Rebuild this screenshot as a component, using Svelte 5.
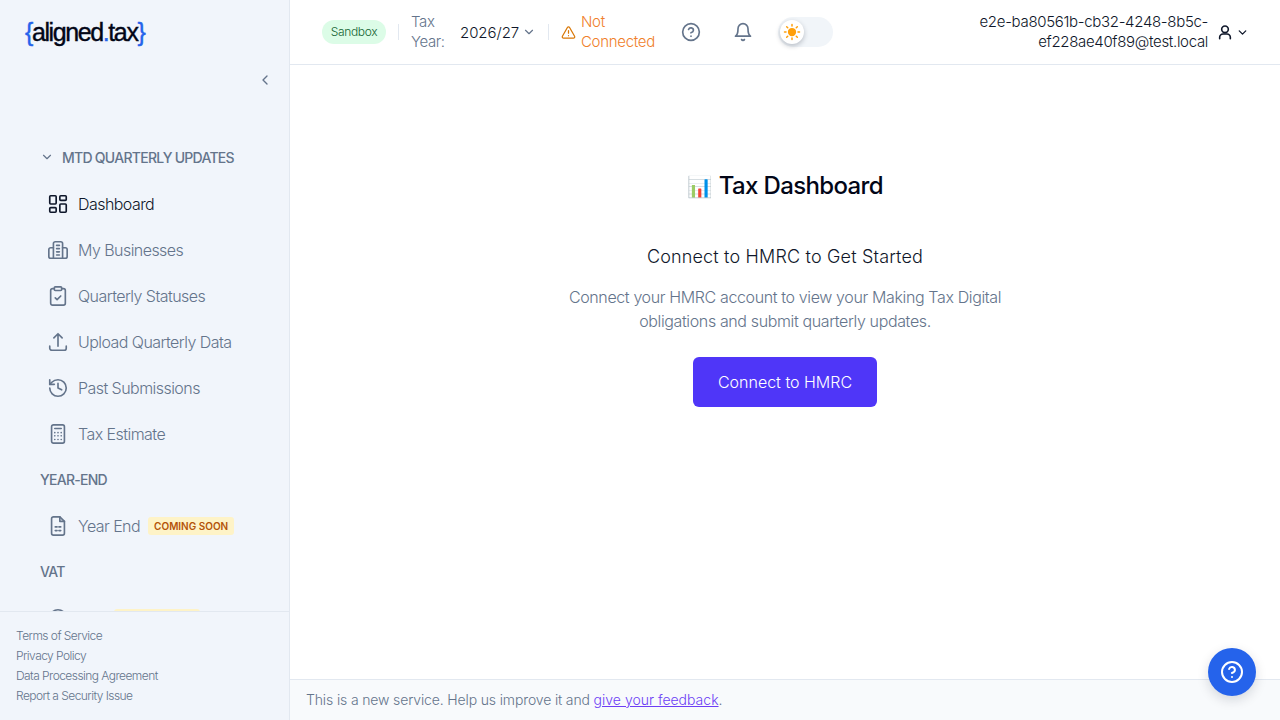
<script>
  const nav = [
    { label: 'Dashboard', icon: 'dash', active: true },
    { label: 'My Businesses', icon: 'biz' },
    { label: 'Quarterly Statuses', icon: 'clip' },
    { label: 'Upload Quarterly Data', icon: 'up' },
    { label: 'Past Submissions', icon: 'hist' },
    { label: 'Tax Estimate', icon: 'calc' }
  ];
  const legal = ['Terms of Service', 'Privacy Policy', 'Data Processing Agreement', 'Report a Security Issue'];
</script>

{#snippet icon(name)}
  <svg class="ico" viewBox="0 0 24 24" fill="none" stroke="currentColor" stroke-width="1.800" stroke-linecap="round" stroke-linejoin="round">
    {#if name === 'dash'}
      <rect x="3" y="3" width="7" height="9" rx="1"/><rect x="14" y="3" width="7" height="5" rx="1"/><rect x="14" y="12" width="7" height="9" rx="1"/><rect x="3" y="16" width="7" height="5" rx="1"/>
    {:else if name === 'biz'}
      <path d="M7 21V5a2 2 0 0 1 2-2h6a2 2 0 0 1 2 2v16"/><path d="M7 9.500H4a2 2 0 0 0-2 2V19a2 2 0 0 0 2 2h16a2 2 0 0 0 2-2v-7.500a2 2 0 0 0-2-2h-3"/><path d="M10.500 7h3M10.500 10.500h3M10.500 14h3M10.500 17.500h3"/>
    {:else if name === 'clip'}
      <rect x="8" y="2" width="8" height="4" rx="1"/><path d="M16 4h2a2 2 0 0 1 2 2v14a2 2 0 0 1-2 2H6a2 2 0 0 1-2-2V6a2 2 0 0 1 2-2h2"/><path d="m9 14 2 2 4-4"/>
    {:else if name === 'up'}
      <path d="M3 16.500v2.250A2.250 2.250 0 0 0 5.250 21h13.500A2.250 2.250 0 0 0 21 18.750V16.500"/><path d="M7.500 7.500 12 3l4.500 4.500M12 3v13.500"/>
    {:else if name === 'hist'}
      <path d="M3 12a9 9 0 1 0 9-9 9.750 9.750 0 0 0-6.740 2.740L3 8"/><path d="M3 3v5h5"/><path d="M12 7v5l4 2"/>
    {:else if name === 'calc'}
      <rect x="5" y="2" width="14" height="20" rx="2"/><path d="M8.500 6h7" /><path d="M8.500 10.500h.01M12 10.500h.01M15.500 10.500h.01M8.500 14h.01M12 14h.01M15.500 14h.01M8.500 18h.01M12 18h.01M15.500 18h.01"/>
    {:else if name === 'file'}
      <path d="M14 2H7a2 2 0 0 0-2 2v16a2 2 0 0 0 2 2h10a2 2 0 0 0 2-2V7z"/><path d="M14 2v5h5"/><path d="M9 13h2M13 13h2M9 17h2M13 17h2"/>
    {:else if name === 'gbp'}
      <circle cx="12" cy="12" r="9"/>
    {/if}
  </svg>
{/snippet}

<div class="shell">
  <aside class="side">
    <div class="logo"><span class="bl">&#123;</span>aligned<span class="bl">.</span>tax<span class="bl">&#125;</span></div>
    <div class="collapse">
      <svg viewBox="0 0 24 24" fill="none" stroke="currentColor" stroke-width="2" stroke-linecap="round" stroke-linejoin="round"><path d="m15 18-6-6 6-6"/></svg>
    </div>
    <nav class="nav">
      <div class="sect first">
        <svg class="chev" viewBox="0 0 24 24" fill="none" stroke="currentColor" stroke-width="2" stroke-linecap="round" stroke-linejoin="round"><path d="m6 9 6 6 6-6"/></svg>
        MTD QUARTERLY UPDATES
      </div>
      {#each nav as n}
        <div class="item" class:active={n.active}>{@render icon(n.icon)}<span>{n.label}</span></div>
      {/each}
      <div class="sect">YEAR-END</div>
      <div class="item">{@render icon('file')}<span>Year End</span><span class="soon">COMING SOON</span></div>
      <div class="sect">VAT</div>
      <div class="item vat">{@render icon('gbp')}<span>VAT</span><span class="soon">COMING SOON</span></div>
    </nav>
    <div class="legal">
      {#each legal as l}<a href="#top">{l}</a>{/each}
    </div>
  </aside>

  <div class="main">
    <header class="top">
      <span class="pill">Sandbox</span>
      <span class="div"></span>
      <span class="ty">Tax Year:</span>
      <span class="year">2026/27
        <svg viewBox="0 0 24 24" fill="none" stroke="currentColor" stroke-width="2" stroke-linecap="round" stroke-linejoin="round"><path d="m6 9 6 6 6-6"/></svg>
      </span>
      <span class="div d2"></span>
      <svg class="warn" viewBox="0 0 24 24" fill="none" stroke="currentColor" stroke-width="2" stroke-linecap="round" stroke-linejoin="round"><path d="m21.730 18-8-14a2 2 0 0 0-3.480 0l-8 14A2 2 0 0 0 4 21h16a2 2 0 0 0 1.730-3"/><path d="M12 9v4M12 17h.01"/></svg>
      <span class="nc">Not Connected</span>
      <svg class="help" viewBox="0 0 24 24" fill="none" stroke="currentColor" stroke-width="2" stroke-linecap="round" stroke-linejoin="round"><circle cx="12" cy="12" r="10"/><path d="M9.090 9a3 3 0 0 1 5.830 1c0 2-3 3-3 3M12 17h.01"/></svg>
      <svg class="bell" viewBox="0 0 24 24" fill="none" stroke="currentColor" stroke-width="2" stroke-linecap="round" stroke-linejoin="round"><path d="M6 8a6 6 0 0 1 12 0c0 7 3 9 3 9H3s3-2 3-9"/><path d="M10.300 21a1.940 1.940 0 0 0 3.400 0"/></svg>
      <div class="toggle">
        <span class="knob">
          <svg viewBox="0 0 24 24" fill="#ff9f0a" stroke="#ff9f0a" stroke-width="2" stroke-linecap="round"><circle cx="12" cy="12" r="4.500"/><path d="M12 2v2M12 20v2M4.900 4.900l1.400 1.400M17.700 17.700l1.400 1.400M2 12h2M20 12h2M6.300 17.700l-1.400 1.400M19.100 4.900l-1.400 1.400"/></svg>
        </span>
      </div>
      <div class="email">e2e-ba80561b-cb32-4248-8b5c-<br>ef228ae40f89@test.local</div>
      <svg class="user" viewBox="0 0 24 24" fill="none" stroke="currentColor" stroke-width="2.400" stroke-linecap="round" stroke-linejoin="round"><circle cx="12" cy="8" r="5"/><path d="M4 22v-2a5 5 0 0 1 5-5h6a5 5 0 0 1 5 5v2"/></svg>
      <svg class="uchev" viewBox="0 0 24 24" fill="none" stroke="currentColor" stroke-width="2.400" stroke-linecap="round" stroke-linejoin="round"><path d="m6 9 6 6 6-6"/></svg>
    </header>

    <main class="body">
      <h1><span class="emo">📊</span> Tax Dashboard</h1>
      <h2>Connect to HMRC to Get Started</h2>
      <p>Connect your HMRC account to view your Making Tax Digital obligations and submit quarterly updates.</p>
      <button>Connect to HMRC</button>
    </main>

    <footer class="foot"><span>This is a new service. Help us improve it and&nbsp;</span><a href="#top">give your feedback</a>.</footer>
  </div>

  <button class="fab" aria-label="Help">
    <svg viewBox="0 0 24 24" fill="none" stroke="currentColor" stroke-width="2" stroke-linecap="round" stroke-linejoin="round"><circle cx="12" cy="12" r="10"/><path d="M9.090 9a3 3 0 0 1 5.830 1c0 2-3 3-3 3M12 17h.01"/></svg>
  </button>
</div>

<style>
  :global(body) { margin: 0; background: #fff; font-family: Inter, "Liberation Sans", sans-serif; }
  .shell { display: flex; width: 1280px; height: 720px; overflow: hidden; color: #0f172a; }
  .side { width: 289px; flex: none; border-right: 1px solid #e2e8f0; background: #f1f5fb; display: flex; flex-direction: column; }
  .logo { padding: 16px 0 0 25px; height: 44px; font-family: "Liberation Sans", sans-serif; font-size: 25px; line-height: 33px; font-weight: 400; letter-spacing: -1.4px; color: #020617; -webkit-text-stroke: 0.4px #020617; }
  .bl { color: #2563eb; -webkit-text-stroke: 0.4px #2563eb; }
  .collapse { display: flex; justify-content: flex-end; padding: 12px 16px 0 0; height: 28px; color: #64748b; }
  .collapse svg { width: 16px; height: 16px; }
  .nav { flex: 1; min-height: 0; overflow: hidden; padding: 0 0 0 40px; margin-top: 35px; }
  .sect { display: flex; align-items: center; height: 46px; box-sizing: border-box; padding-bottom: 2px; font-size: 14px; font-weight: 500; letter-spacing: -0.73px; color: #64748b; }
  .chev { width: 14px; height: 14px; margin-right: 8px; }
  .item { display: flex; align-items: center; height: 46px; padding-left: 7px; font-size: 16px; letter-spacing: -0.55px; color: #64748b; font-weight: 300; }
  .item.active { color: #0f172a; }
  .ico { width: 22px; height: 22px; margin-right: 9px; flex: none; }
  .soon { margin-left: 8px; background: #fef3c7; color: #b45309; font-size: 10px; font-weight: 600; line-height: 18px; padding: 0 6px; border-radius: 3px; letter-spacing: 0; }
  .legal { height: 109px; box-sizing: border-box; flex: none; border-top: 1px solid #e2e8f0; padding: 14px 16px; display: flex; flex-direction: column; }
  .legal a { font-size: 12px; line-height: 20px; color: #64748b; text-decoration: none; font-weight: 300; letter-spacing: -0.55px; }

  .main { flex: 1; display: flex; flex-direction: column; min-width: 0; }
  .top { height: 65px; flex: none; box-sizing: border-box; border-bottom: 1px solid #e2e8f0; display: flex; align-items: center; padding-left: 32px; font-size: 15px; }
  .pill { width: 64px; height: 24px; line-height: 24px; text-align: center; border-radius: 12px; background: #dcfce7; color: #166534; font-size: 12px; letter-spacing: -0.35px; font-weight: 300; }
  .div { width: 1px; height: 16px; background: #e2e8f0; margin: 0 12px; }
  .ty { width: 49px; color: #64748b; line-height: 20px; font-weight: 300; letter-spacing: -0.4px; }
  .year { display: flex; align-items: center; width: 88px; color: #0f172a; font-weight: 300; letter-spacing: -0.05px; }
  .year svg { width: 14px; height: 14px; color: #64748b; margin-left: 3px; }
  .d2 { margin: 0 12px 0 0; }
  .warn { width: 15px; height: 15px; color: #d97706; margin-right: 5px; flex: none; }
  .nc { width: 85px; color: #f0802a; line-height: 20px; font-weight: 300; letter-spacing: -0.3px; }
  .help { width: 20px; height: 20px; color: #64748b; margin-left: 15px; flex: none; }
  .bell { width: 20px; height: 20px; color: #64748b; margin-left: 32px; flex: none; }
  .toggle { width: 55px; height: 30px; margin-left: 25px; border-radius: 15px; background: #f1f5f9; display: flex; align-items: center; padding-left: 2px; box-sizing: border-box; flex: none; }
  .knob { width: 24px; height: 24px; border-radius: 50%; background: #fff; box-shadow: 0 2px 5px rgba(15,23,42,.25); display: flex; align-items: center; justify-content: center; }
  .knob svg { width: 18px; height: 18px; }
  .email { margin-left: auto; text-align: right; font-size: 15px; line-height: 20px; font-weight: 300; white-space: nowrap; color: #0f172a; letter-spacing: -0.32px; }
  .user { width: 16px; height: 16px; margin-left: 9px; flex: none; color: #0f172a; }
  .uchev { width: 13px; height: 13px; margin: 0 31px 0 3px; flex: none; color: #0f172a; }

  .body { flex: 1; min-height: 0; display: flex; flex-direction: column; align-items: center; padding-top: 105px; box-sizing: border-box; }
  h1 { margin: 0; font-size: 24px; line-height: 32px; font-weight: 500; color: #020617; letter-spacing: -0.65px; }
  .emo { font-size: 20.500px; letter-spacing: 0; }
  h2 { margin: 40px 0 0; font-size: 18px; line-height: 28px; font-weight: 300; color: #0f172a; letter-spacing: 0.17px; }
  p { margin: 14px 0 0; width: 448px; text-align: center; font-size: 16px; line-height: 24px; font-weight: 300; color: #64748b; letter-spacing: -0.37px; }
  .body button { margin-top: 24px; width: 184px; height: 50px; border: 0; border-radius: 6px; background: #4f36f8; color: #fff; font: 300 16px Inter, sans-serif; }
  .foot { height: 41px; flex: none; box-sizing: border-box; border-top: 1px solid #e2e8f0; background: #f8fafc; padding: 0 16px 2px; display: flex; align-items: center; font-size: 14px; font-weight: 300; color: #64748b; white-space: pre; }
  .foot span { letter-spacing: -0.14px; }
  .foot a { color: #6d3ef5; }
  .fab { position: fixed; left: 1208px; top: 648px; width: 48px; height: 48px; border: 0; padding: 0; border-radius: 50%; background: #2563eb; color: #fff; display: flex; align-items: center; justify-content: center; box-shadow: 0 4px 12px rgba(15,23,42,.15); }
  .fab svg { width: 24px; height: 24px; }
</style>
